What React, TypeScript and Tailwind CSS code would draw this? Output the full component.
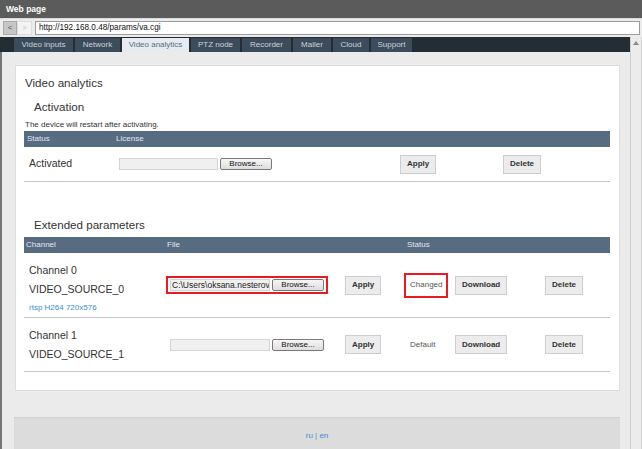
import React from 'react';
import { clsx } from 'clsx';

const tabs = [
  { label: 'Video inputs', w: 'w-[59px]' },
  { label: 'Network', w: 'w-[45px]' },
  { label: 'Video analytics', w: 'w-[67px]', active: true },
  { label: 'PTZ node', w: 'w-[49px]' },
  { label: 'Recorder', w: 'w-[49px]' },
  { label: 'Mailer', w: 'w-[38px]' },
  { label: 'Cloud', w: 'w-[36px]' },
  { label: 'Support', w: 'w-[41px]' },
];

function Btn({ children }: { children: React.ReactNode }) {
  return (
    <button className="h-[19px] px-[6px] bg-[#ececec] border border-[#cdcdcd] text-[8px] font-bold leading-none text-[#333333]">
      {children}
    </button>
  );
}

function FileInput({ value, w }: { value?: string; w: string }) {
  return (
    <div className="flex items-center gap-[2px]">
      <div
        className={clsx(
          'h-[12px] bg-[#f0f0f0] border border-[#d4d4d4] text-[8.5px] leading-[10px] overflow-hidden whitespace-nowrap pl-[1px] text-[#222222]',
          w
        )}
      >
        {value}
      </div>
      <button className="h-[12px] w-[52px] rounded-[2px] border border-[#7a7a7a] bg-gradient-to-b from-[#f6f6f6] to-[#dedede] text-[8px] leading-none text-[#111111]">
        Browse...
      </button>
    </div>
  );
}

function ChannelRow({
  n,
  file,
  status,
  changed,
  link,
}: {
  n: number;
  file?: string;
  status: string;
  changed?: boolean;
  link?: boolean;
}) {
  return (
    <div className="flex items-center border-b border-[#c8c8c8]">
      <div className="w-[142px] pl-[5px] pt-[8px] pb-[7px] flex flex-col text-[10.5px] text-[#333333]">
        <span className="leading-[19px]">Channel {n}</span>
        <span className="leading-[19px]">VIDEO_SOURCE_{n}</span>
        {link && <span className="leading-[17px] -mb-[6px] text-[8px] text-[#3b8ed4]">rtsp H264 720x576</span>}
      </div>
      <div className="w-[179px] flex items-center">
        <div
          className={clsx(
            'flex border-2 px-[2px] py-[1px]',
            changed ? 'border-[#ea1a20]' : 'border-transparent'
          )}
        >
          <FileInput value={file} w="w-[100px]" />
        </div>
      </div>
      <div className="w-[59px] flex items-center">
        <Btn>Apply</Btn>
      </div>
      <div className="w-[51px] flex items-center">
        <div
          className={clsx(
            'flex items-center h-[25px] border-2 px-[4px] text-[8px] text-[#555555]',
            changed ? 'border-[#ea1a20]' : 'border-transparent'
          )}
        >
          {status}
        </div>
      </div>
      <div className="w-[90px] flex items-center">
        <Btn>Download</Btn>
      </div>
      <div className="flex items-center">
        <Btn>Delete</Btn>
      </div>
    </div>
  );
}

export default function App() {
  return (
    <div className="w-[642px] h-[449px] overflow-hidden flex flex-col bg-[#ebebeb] font-['Liberation_Sans',Arial,sans-serif]">
      {/* Window title */}
      <div className="h-[18px] shrink-0 bg-[#5b5b5b] px-[6px] flex items-center text-[8.5px] font-bold text-white">
        Web page
      </div>

      {/* Address row */}
      <div className="h-[19px] shrink-0 bg-[#ececec] flex items-center pl-[3px] pr-[2px] border-t border-[#dadada]">
        <div className="w-[14px] h-[14px] bg-[#c6c6c6] border border-[#aaaaaa] flex items-center justify-center text-[8px] text-[#555555]">
          &lt;
        </div>
        <div className="w-[15px] h-[14px] bg-[#f4f4f4] border border-[#dddddd] flex items-center justify-center text-[7px] text-[#bbbbbb]">
          &gt;
        </div>
        <div className="ml-[3px] flex-1 h-[14px] bg-white border border-[#9c9c9c] flex items-center pl-[3px] text-[8.2px] text-[#111111]">
          http://192.168.0.48/params/va.cgi
        </div>
      </div>

      <div className="flex flex-1 min-h-0">
        <div className="w-[630px] flex flex-col">
          {/* Tabs */}
          <div className="h-[15px] shrink-0 bg-[#252d34] flex items-end gap-[2px] pl-[14px]">
            {tabs.map((t) => (
              <div
                key={t.label}
                className={clsx(
                  'h-[14px] flex items-center justify-center text-[8px] whitespace-nowrap',
                  t.w,
                  t.active ? 'bg-[#e5ebf0] text-[#5c6c7c]' : 'bg-[#3d4c5b] text-[#c8d2db]'
                )}
              >
                {t.label}
              </div>
            ))}
          </div>

          {/* Page */}
          <div className="flex-1 border-l-2 border-[#767676] pt-[13px] pl-[13px] pr-[10px]">
            <div className="bg-white border border-[#dedede] pl-[8px] pr-[9px] pb-[18px]">
              <div className="mt-[10px] pl-[1px] text-[11.6px] leading-[14px] text-[#333333]">Video analytics</div>
              <div className="mt-[10px] pl-[10px] text-[11.6px] leading-[14px] text-[#333333]">Activation</div>
              <div className="mt-[6px] pl-[1px] text-[8px] leading-[10px] text-[#333333]">
                The device will restart after activating.
              </div>

              <div className="mt-[1px] h-[16px] bg-[#576b81] flex items-center text-[8px] text-[#e2e8ee]">
                <span className="w-[92px] pl-[3px]">Status</span>
                <span>License</span>
              </div>
              <div className="h-[35px] flex items-center border-b border-[#c8c8c8]">
                <div className="w-[95px] pl-[5px] text-[10.5px] text-[#333333]">Activated</div>
                <div className="w-[281px] flex items-center">
                  <FileInput w="w-[99px]" />
                </div>
                <div className="w-[103px] flex items-center">
                  <Btn>Apply</Btn>
                </div>
                <div className="flex items-center">
                  <Btn>Delete</Btn>
                </div>
              </div>

              <div className="mt-[36px] pl-[10px] text-[11.6px] leading-[14px] text-[#333333]">Extended parameters</div>
              <div className="mt-[5px] h-[16px] bg-[#576b81] flex items-center text-[8px] text-[#e2e8ee]">
                <span className="w-[142px] pl-[2px]">Channel</span>
                <span className="w-[238px] pl-[1px]">File</span>
                <span className="pl-[3px]">Status</span>
              </div>
              <ChannelRow n={0} file="C:\Users\oksana.nesterov" status="Changed" changed link />
              <ChannelRow n={1} status="Default" />
            </div>

            <div className="mt-[26px] -ml-[1px] h-[40px] bg-[#dcdcdc] border-t border-[#d0d0d0] pt-[13px] text-center text-[8px] leading-[10px]">
              <span className="text-[#3b8ed4]">ru</span>
              <span className="text-[#6f8fb0]"> | </span>
              <span className="text-[#3b8ed4]">en</span>
            </div>
          </div>
        </div>

        {/* Scrollbar */}
        <div className="w-[12px] bg-[#ececec] border-l border-[#cfcfcf] border-r border-r-[#d6d6d6] flex justify-center pt-[4px]">
          <svg width="6" height="4" viewBox="0 0 6 4">
            <path d="M0 4 L3 0 L6 4 Z" fill="#8a8a8a" />
          </svg>
        </div>
      </div>
    </div>
  );
}
